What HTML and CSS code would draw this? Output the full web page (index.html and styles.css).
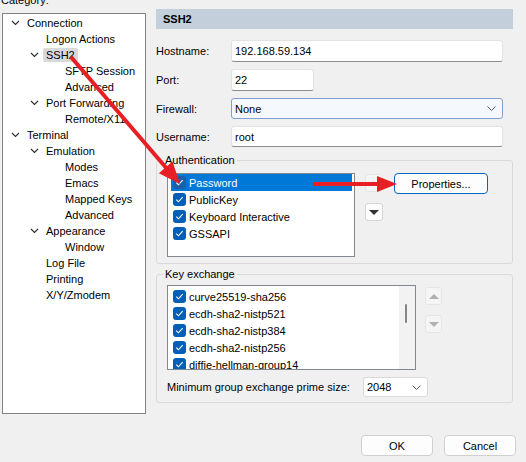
FILE: index.html
```html
<!DOCTYPE html>
<html lang="en">
<head>
    <meta charset="UTF-8">
    <meta name="viewport" content="width=device-width, initial-scale=1.0">
    <title>Session Options - SSH2</title>
    <link rel="stylesheet" href="styles.css">
</head>

<body>
<div class="dialog">
    <div class="main">
        <!-- left: category tree -->
        <div class="category">
            <div class="category-label">Category:</div>
            <ul class="tree">
                <li class="node lvl0"><span class="twist"><svg width="9" height="6" viewBox="0 0 9 6"><path d="M1 1l3.5 3.5L8 1" fill="none" stroke="#333" stroke-width="1.2"/></svg></span><span class="name">Connection</span></li>
                <li class="node lvl1"><span class="twist"></span><span class="name">Logon Actions</span></li>
                <li class="node lvl1 current"><span class="twist"><svg width="9" height="6" viewBox="0 0 9 6"><path d="M1 1l3.5 3.5L8 1" fill="none" stroke="#333" stroke-width="1.2"/></svg></span><span class="name">SSH2</span></li>
                <li class="node lvl2"><span class="twist"></span><span class="name">SFTP Session</span></li>
                <li class="node lvl2"><span class="twist"></span><span class="name">Advanced</span></li>
                <li class="node lvl1"><span class="twist"><svg width="9" height="6" viewBox="0 0 9 6"><path d="M1 1l3.5 3.5L8 1" fill="none" stroke="#333" stroke-width="1.2"/></svg></span><span class="name">Port Forwarding</span></li>
                <li class="node lvl2"><span class="twist"></span><span class="name">Remote/X11</span></li>
                <li class="node lvl0"><span class="twist"><svg width="9" height="6" viewBox="0 0 9 6"><path d="M1 1l3.5 3.5L8 1" fill="none" stroke="#333" stroke-width="1.2"/></svg></span><span class="name">Terminal</span></li>
                <li class="node lvl1"><span class="twist"><svg width="9" height="6" viewBox="0 0 9 6"><path d="M1 1l3.5 3.5L8 1" fill="none" stroke="#333" stroke-width="1.2"/></svg></span><span class="name">Emulation</span></li>
                <li class="node lvl2"><span class="twist"></span><span class="name">Modes</span></li>
                <li class="node lvl2"><span class="twist"></span><span class="name">Emacs</span></li>
                <li class="node lvl2"><span class="twist"></span><span class="name">Mapped Keys</span></li>
                <li class="node lvl2"><span class="twist"></span><span class="name">Advanced</span></li>
                <li class="node lvl1"><span class="twist"><svg width="9" height="6" viewBox="0 0 9 6"><path d="M1 1l3.5 3.5L8 1" fill="none" stroke="#333" stroke-width="1.2"/></svg></span><span class="name">Appearance</span></li>
                <li class="node lvl2"><span class="twist"></span><span class="name">Window</span></li>
                <li class="node lvl1"><span class="twist"></span><span class="name">Log File</span></li>
                <li class="node lvl1"><span class="twist"></span><span class="name">Printing</span></li>
                <li class="node lvl1"><span class="twist"></span><span class="name">X/Y/Zmodem</span></li>
            </ul>
        </div>

        <!-- right: SSH2 page -->
        <div class="page">
            <div class="page-title">SSH2</div>

            <div class="form">
                <span class="form-label">Hostname:</span>
                <div class="field">192.168.59.134</div>
                <span class="form-label">Port:</span>
                <div class="field port">22</div>
                <span class="form-label">Firewall:</span>
                <div class="combo focus">
                    <span>None</span>
                    <svg width="9" height="5" viewBox="0 0 9 5"><path d="M0.5 0.5l4 4 4-4" fill="none" stroke="#555" stroke-width="1"/></svg>
                </div>
                <span class="form-label">Username:</span>
                <div class="field short">root</div>
            </div>

            <fieldset class="group auth">
                <legend>Authentication</legend>
                <div class="group-body">
                    <ul class="list auth-list">
                        <li class="item selected"><span class="check"><svg width="13" height="13" viewBox="0 0 13 13"><path d="M3.3 6.7l2.1 2.1 4.3-4.6" fill="none" stroke="#fff" stroke-width="1.1"/></svg></span>Password</li>
                        <li class="item"><span class="check"><svg width="13" height="13" viewBox="0 0 13 13"><path d="M3.3 6.7l2.1 2.1 4.3-4.6" fill="none" stroke="#fff" stroke-width="1.1"/></svg></span>PublicKey</li>
                        <li class="item"><span class="check"><svg width="13" height="13" viewBox="0 0 13 13"><path d="M3.3 6.7l2.1 2.1 4.3-4.6" fill="none" stroke="#fff" stroke-width="1.1"/></svg></span>Keyboard Interactive</li>
                        <li class="item"><span class="check"><svg width="13" height="13" viewBox="0 0 13 13"><path d="M3.3 6.7l2.1 2.1 4.3-4.6" fill="none" stroke="#fff" stroke-width="1.1"/></svg></span>GSSAPI</li>
                    </ul>
                    <div class="updown">
                        <span class="move disabled"><span class="tri up"></span></span>
                        <span class="move"><span class="tri down"></span></span>
                    </div>
                    <button class="btn props">Properties...</button>
                </div>
            </fieldset>

            <fieldset class="group kex">
                <legend>Key exchange</legend>
                <div class="group-body">
                    <div class="list kex-list">
                        <ul class="kex-items">
                            <li class="item"><span class="check"><svg width="13" height="13" viewBox="0 0 13 13"><path d="M3.3 6.7l2.1 2.1 4.3-4.6" fill="none" stroke="#fff" stroke-width="1.1"/></svg></span>curve25519-sha256</li>
                            <li class="item"><span class="check"><svg width="13" height="13" viewBox="0 0 13 13"><path d="M3.3 6.7l2.1 2.1 4.3-4.6" fill="none" stroke="#fff" stroke-width="1.1"/></svg></span>ecdh-sha2-nistp521</li>
                            <li class="item"><span class="check"><svg width="13" height="13" viewBox="0 0 13 13"><path d="M3.3 6.7l2.1 2.1 4.3-4.6" fill="none" stroke="#fff" stroke-width="1.1"/></svg></span>ecdh-sha2-nistp384</li>
                            <li class="item"><span class="check"><svg width="13" height="13" viewBox="0 0 13 13"><path d="M3.3 6.7l2.1 2.1 4.3-4.6" fill="none" stroke="#fff" stroke-width="1.1"/></svg></span>ecdh-sha2-nistp256</li>
                            <li class="item"><span class="check"><svg width="13" height="13" viewBox="0 0 13 13"><path d="M3.3 6.7l2.1 2.1 4.3-4.6" fill="none" stroke="#fff" stroke-width="1.1"/></svg></span>diffie-hellman-group14</li>
                        </ul>
                        <div class="scrollbar"><span class="thumb"></span></div>
                    </div>
                    <div class="updown kex-move">
                        <span class="move disabled"><span class="tri up"></span></span>
                        <span class="move disabled"><span class="tri down"></span></span>
                    </div>
                </div>
                <div class="prime-row">
                    <span>Minimum group exchange prime size:</span>
                    <div class="combo small">
                        <span>2048</span>
                        <svg width="9" height="5" viewBox="0 0 9 5"><path d="M0.5 0.5l4 4 4-4" fill="none" stroke="#555" stroke-width="1"/></svg>
                    </div>
                </div>
            </fieldset>
        </div>
    </div>

    <div class="footer">
        <button class="btn">OK</button>
        <button class="btn">Cancel</button>
    </div>

    <!-- red annotation arrows drawn over the dialog -->
    <svg class="arrows" width="526" height="462" viewBox="0 0 526 462">
        <line x1="71" y1="57" x2="168" y2="170" stroke="#e81e25" stroke-width="4"/>
        <polygon points="180,184 158.9,173.2 172.5,161.4" fill="#e81e25"/>
        <line x1="313" y1="184" x2="380" y2="184" stroke="#e81e25" stroke-width="4"/>
        <polygon points="397,184 377,176 377,192" fill="#e81e25"/>
    </svg>
</div>
</body>
</html>
```

FILE: styles.css
```css
body {
    margin: 0;
    background-color: #f0f0f0;
    font-family: "Liberation Sans", Arial, sans-serif;
    font-size: 11px;
    color: #000;
}

.dialog {
    position: relative;
    width: 526px;
    height: 462px;
    overflow: hidden;
}

.main {
    display: flex;
    height: 414px;
}

/* category tree */
.category {
    width: 144px;
    margin-left: 2px;
}

.category-label {
    height: 13px;
    line-height: 13px;
    margin-top: -6px;
    margin-left: -1px;
}

.tree {
    box-sizing: border-box;
    height: 401px;
    margin: 6px 0 0;
    padding: 1px 0 0;
    list-style: none;
    background: #fff;
    border: 1px solid #828282;
}

.node {
    display: flex;
    align-items: center;
    height: 16px;
    padding-left: 4px;
}

.lvl1 {
    padding-left: 23px;
}

.lvl2 {
    padding-left: 42px;
}

.twist {
    display: flex;
    align-items: center;
    justify-content: center;
    width: 16px;
    height: 16px;
    margin-right: 4px;
    flex-shrink: 0;
}

.name {
    line-height: 14px;
    white-space: nowrap;
}

.current .name {
    background: #d9d9d9;
    padding: 0 3px;
    margin-left: -3px;
    border-radius: 2px;
}

/* right side page */
.page {
    width: 357px;
    margin-left: 10px;
    padding-top: 9px;
}

.page-title {
    height: 20px;
    line-height: 20px;
    padding-left: 7px;
    background: #c3cfdb;
    font-weight: bold;
}

.form {
    display: grid;
    grid-template-columns: 75px 272px;
    grid-template-rows: 22px 22px 21px 21px;
    row-gap: 7px;
    align-items: center;
    margin-top: 11px;
}

.field,
.combo {
    box-sizing: border-box;
    display: flex;
    align-items: center;
    height: 100%;
    padding: 0 3px;
    background: #fff;
    border: 1px solid #e2e2e2;
    border-bottom-color: #8d8d8d;
    border-radius: 3px;
}

.port {
    width: 83px;
}

.combo {
    justify-content: space-between;
    padding-right: 6px;
}

.combo.focus {
    background: #f5f8fc;
    border-color: #7fa0cf;
}

/* group boxes */
.group {
    box-sizing: border-box;
    min-width: 0;
    margin: 6px 0 0;
    padding: 0 6px 6px 10px;
    border: 1px solid #d9d9d9;
    border-radius: 3px;
}

.group legend {
    margin-left: -4px;
    padding: 0 2px;
    line-height: 14px;
}

.group-body {
    display: flex;
    align-items: flex-start;
    padding-top: 6px;
}

.kex {
    margin-top: 3px;
    padding-bottom: 5px;
}

.kex .group-body {
    padding-top: 4px;
}

.list {
    box-sizing: border-box;
    margin: 0;
    padding: 0;
    list-style: none;
    background: #fff;
    border: 1px solid #828790;
}

.auth-list {
    width: 188px;
    height: 84px;
}

.item {
    display: flex;
    align-items: center;
    gap: 3px;
    height: 17px;
    margin: 0 2px 0 3px;
    padding-left: 2px;
    white-space: nowrap;
}

.item.selected {
    background: #0078d7;
    color: #fff;
}

.check {
    display: block;
    width: 13px;
    height: 13px;
    background: #005fb8;
    border-radius: 3px;
    flex-shrink: 0;
}

.check svg {
    display: block;
}

.selected .check {
    background: #1d5ea8;
}

.updown {
    display: flex;
    flex-direction: column;
    gap: 11px;
    margin: 1px 0 0 10px;
}

.move {
    box-sizing: border-box;
    display: flex;
    align-items: center;
    justify-content: center;
    width: 18px;
    height: 18px;
    background: #fdfdfd;
    border: 1px solid #d4d4d4;
    border-radius: 3px;
}

.move.disabled {
    background: #f5f5f5;
    border-color: #e6e6e6;
}

.tri {
    width: 0;
    height: 0;
    border-left: 5px solid transparent;
    border-right: 5px solid transparent;
}

.tri.down {
    border-top: 5px solid #333;
}

.tri.up {
    border-bottom: 5px solid #333;
}

.disabled .tri.down {
    border-top-color: #b0b0b0;
}

.disabled .tri.up {
    border-bottom-color: #b0b0b0;
}

.auth .disabled .tri.up {
    border-bottom-color: #d6d6d6;
}

.btn {
    box-sizing: border-box;
    height: 21px;
    padding: 0;
    background: #fdfdfd;
    border: 1px solid #d0d0d0;
    border-radius: 4px;
    font-family: inherit;
    font-size: 11px;
    color: #000;
}

.props {
    width: 94px;
    margin-left: 11px;
    border-color: #0067c0;
}

/* key exchange list */
.kex-list {
    display: flex;
    width: 249px;
    height: 85px;
    overflow: hidden;
}

.kex-items {
    flex: 1;
    margin: 0;
    padding: 2px 0 0;
    list-style: none;
    overflow: hidden;
}

.scrollbar {
    width: 16px;
    background: #f2f2f2;
}

.thumb {
    display: block;
    width: 2px;
    height: 19px;
    margin: 18px 0 0 6px;
    background: #858585;
    border-radius: 1px;
}

.kex-move {
    gap: 10px;
    margin: 2px 0 0 9px;
}

.kex-move .move {
    width: 17px;
}

.prime-row {
    display: flex;
    align-items: center;
    margin-top: 7px;
}

.prime-row > span {
    width: 196px;
}

.combo.small {
    width: 65px;
    height: 20px;
    border-color: #d9d9d9;
}

/* bottom buttons */
.footer {
    display: flex;
    justify-content: flex-end;
    gap: 11px;
    margin-top: 21px;
    padding-right: 10px;
}

.footer .btn {
    width: 72px;
}

.arrows {
    position: absolute;
    top: 0;
    left: 0;
    pointer-events: none;
}
```
